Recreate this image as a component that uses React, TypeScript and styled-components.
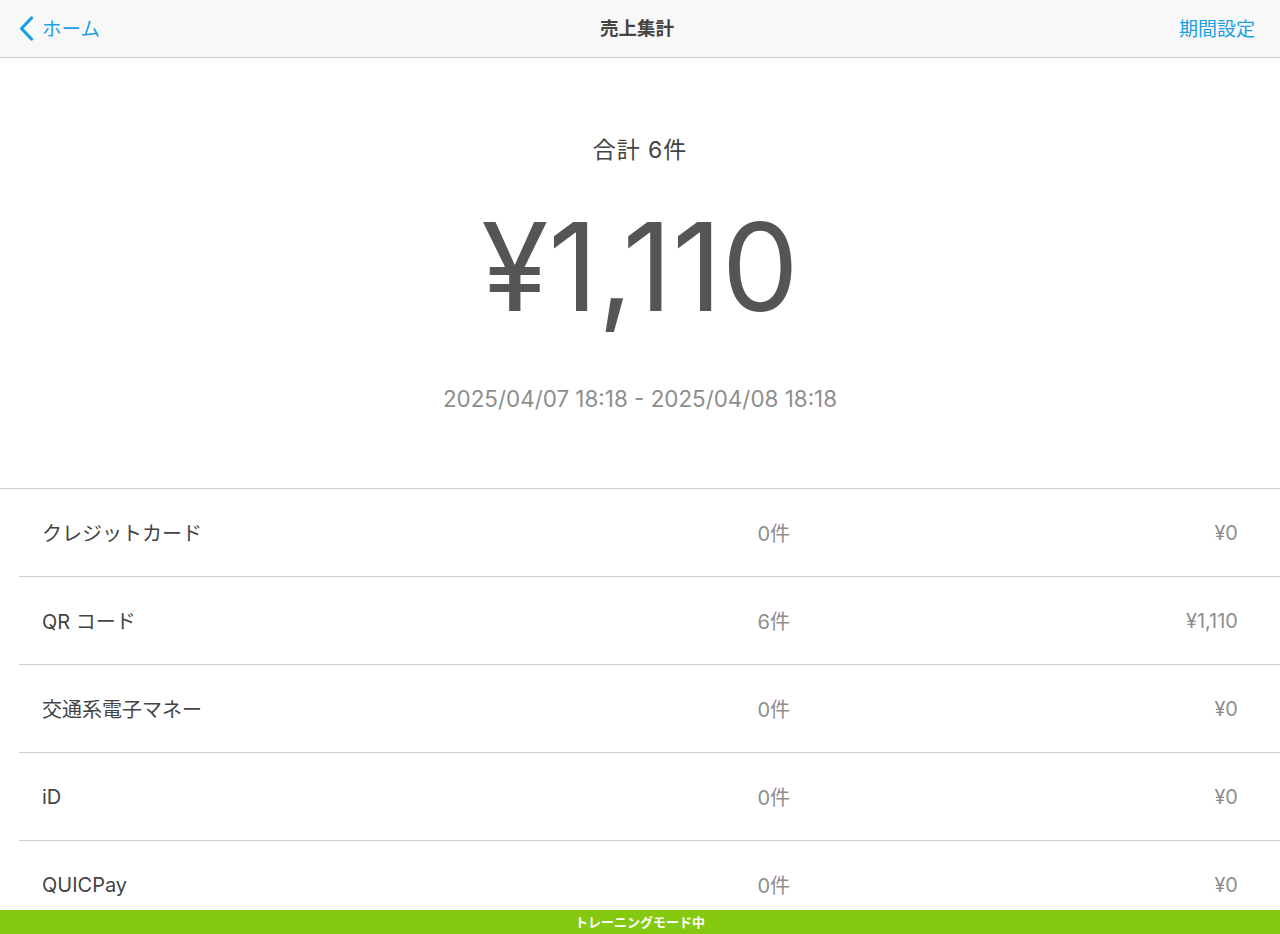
import React from "react";
import styled, { createGlobalStyle } from "styled-components";

const GlobalStyle = createGlobalStyle`
  html, body { margin: 0; padding: 0; background: #ffffff; }
  body { font-family: Inter, "Noto Sans CJK JP", sans-serif; -webkit-font-smoothing: antialiased; }
  * { box-sizing: border-box; }
`;

const Page = styled.div`
  width: 1280px;
  height: 934px;
  display: flex;
  flex-direction: column;
  overflow: hidden;
  background: #ffffff;
`;

const NavBar = styled.header`
  flex: 0 0 58px;
  height: 58px;
  display: grid;
  grid-template-columns: 1fr auto 1fr;
  align-items: center;
  background: #f8f8f8;
  border-bottom: 1px solid #c9c9c9;
  padding: 0 25px 3px 19px;
`;

const BackButton = styled.button`
  justify-self: start;
  display: flex;
  align-items: center;
  gap: 8px;
  background: none;
  border: none;
  padding: 0;
  color: #1a9fe3;
  font-family: "Noto Sans CJK JP", sans-serif;
  font-size: 19.5px;
  cursor: pointer;
  svg { margin-top: 2px; }
`;

const NavTitle = styled.h1`
  margin: 0;
  font-family: "Noto Sans CJK JP", sans-serif;
  font-size: 18.5px;
  font-weight: 600;
  color: #444444;
`;

const NavAction = styled.button`
  justify-self: end;
  background: none;
  border: none;
  padding: 0;
  color: #1a9fe3;
  font-family: "Noto Sans CJK JP", sans-serif;
  font-size: 19px;
  cursor: pointer;
`;

const Content = styled.main`
  flex: 1 1 auto;
  overflow: hidden;
`;

const Summary = styled.section`
  display: flex;
  flex-direction: column;
  align-items: center;
  padding: 77px 0 74px;
  border-bottom: 1px solid #cfcfcf;
`;

const SummaryCount = styled.div`
  font-size: 23px;
  line-height: 30px;
  letter-spacing: 1px;
  color: #444444;
`;

const TotalAmount = styled.div`
  margin-top: 41px;
  font-size: 122px;
  line-height: 122px;
  color: #555555;
`;

const Period = styled.div`
  margin-top: 56px;
  font-size: 22.4px;
  line-height: 30px;
  color: #8e8e8e;
`;

const List = styled.ul`
  list-style: none;
  margin: 0;
  padding: 0 0 0 19px;
`;

const Row = styled.li`
  height: 88px;
  display: grid;
  grid-template-columns: 1fr 100px 448px;
  align-items: center;
  padding: 0 42px 0 23px;
  border-bottom: 1px solid #cfcfcf;
`;

const Label = styled.span`
  font-size: 20px;
  color: #444444;
`;

const Value = styled.span`
  justify-self: end;
  font-size: 20px;
  color: #8e8e8e;
`;

const TrainingBar = styled.footer`
  flex: 0 0 24px;
  height: 24px;
  display: flex;
  align-items: center;
  justify-content: center;
  padding-bottom: 2px;
  background: #84c90f;
  color: #ffffff;
  font-family: "Noto Sans CJK JP", sans-serif;
  font-size: 13px;
  font-weight: 700;
`;

const ChevronLeft = () => (
  <svg width="15" height="25" viewBox="0 0 15 25" fill="none">
    <path d="M12.5 2 L2.5 12.5 L12.5 23" stroke="currentColor" strokeWidth="3.2" strokeLinecap="round" strokeLinejoin="round" />
  </svg>
);

const rows = [
  { label: "クレジットカード", count: "0件", amount: "¥0" },
  { label: "QR コード", count: "6件", amount: "¥1,110" },
  { label: "交通系電子マネー", count: "0件", amount: "¥0" },
  { label: "iD", count: "0件", amount: "¥0" },
  { label: "QUICPay", count: "0件", amount: "¥0" },
];

export default function App() {
  return (
    <>
      <GlobalStyle />
      <Page>
        <NavBar>
          <BackButton>
            <ChevronLeft />
            ホーム
          </BackButton>
          <NavTitle>売上集計</NavTitle>
          <NavAction>期間設定</NavAction>
        </NavBar>
        <Content>
          <Summary>
            <SummaryCount>合計 6件</SummaryCount>
            <TotalAmount>¥1,110</TotalAmount>
            <Period>2025/04/07 18:18 - 2025/04/08 18:18</Period>
          </Summary>
          <List>
            {rows.map((r) => (
              <Row key={r.label}>
                <Label>{r.label}</Label>
                <Value>{r.count}</Value>
                <Value>{r.amount}</Value>
              </Row>
            ))}
          </List>
        </Content>
        <TrainingBar>トレーニングモード中</TrainingBar>
      </Page>
    </>
  );
}
